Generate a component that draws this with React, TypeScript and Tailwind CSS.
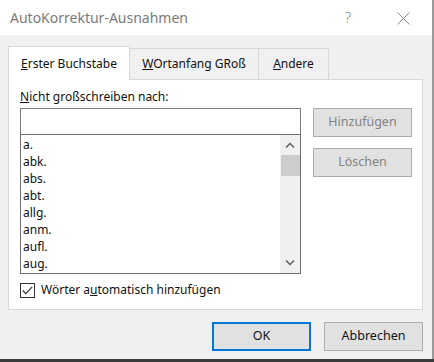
import React from 'react';

const items = ['a.', 'abk.', 'abs.', 'abt.', 'allg.', 'anm.', 'aufl.', 'aug.'];

const font = "font-['Noto_Sans',sans-serif]";

const Btn: React.FC<{ label: string; disabled?: boolean; primary?: boolean; className?: string }> = ({
  label,
  disabled,
  primary,
  className = '',
}) => (
  <div
    className={`flex h-[29px] w-[99px] items-center justify-center bg-[#e1e1e1] text-[12.5px] ${
      primary ? 'border-2 border-[#0078d7]' : 'border border-[#adadad]'
    } ${disabled ? 'text-[#838383]' : 'text-[#111]'} ${className}`}
  >
    {label}
  </div>
);

export default function App() {
  return (
    <div className={`flex h-[362px] w-[434px] flex-col bg-white ${font}`}>
      {/* title bar */}
      <div className="flex h-[35px] shrink-0 items-center justify-between border-r-2 border-[#9a9a9a] bg-white pl-[10px] pr-[22px]">
        <span className="text-[14px] text-[#7a7a7a]">AutoKorrektur-Ausnahmen</span>
        <div className="flex items-center gap-[46px]">
          <span className="text-[15px] font-light text-[#8a8a8a]">?</span>
          <svg width="13" height="13" viewBox="0 0 13 13" className="mt-[1px]">
            <path d="M0.5 0.5 L12.5 12.5 M12.5 0.5 L0.5 12.5" stroke="#8a8a8a" strokeWidth="1" fill="none" />
          </svg>
        </div>
      </div>

      {/* body */}
      <div className="flex flex-1 flex-col border-r-2 border-[#9a9a9a] bg-[#f0f0f0] pl-[8px] pr-[9px] pt-[11px]">
        {/* tabs */}
        <div className="flex h-[33px] items-end text-[12px] text-[#111]">
          <div className="relative z-10 -mb-px flex h-[34px] w-[122px] items-center justify-center border-x border-t border-[#d9d9d9] bg-white">
            <span>
              <u>E</u>rster Buchstabe
            </span>
          </div>
          <div className="flex h-[31px] w-[129px] items-center justify-center border-r border-t border-[#d9d9d9]">
            <span>
              <u>W</u>Ortanfang GRoß
            </span>
          </div>
          <div className="flex h-[31px] w-[70px] items-center justify-center border-r border-t border-[#d9d9d9]">
            <span>
              <u>A</u>ndere
            </span>
          </div>
        </div>

        {/* panel */}
        <div className="flex h-[231px] flex-col border border-[#d9d9d9] bg-white pl-[11px] pt-[8px] text-[12px] text-[#111]">
          <div className="flex">
            <div className="flex w-[281px] flex-col">
              <div className="h-[20px] leading-[18px]">
                <u>N</u>icht großschreiben nach:
              </div>
              <div className="h-[27px] border border-[#7a7a7a] bg-white" />
              <div className="-mt-px flex h-[140px] border border-[#6e6e6e] bg-white">
                <div className="flex-1 pl-[2px] pt-[1px]">
                  {items.map((it) => (
                    <div key={it} className="h-[17px] leading-[17px]">
                      {it}
                    </div>
                  ))}
                </div>
                <div className="flex w-[20px] flex-col items-center bg-[#f0f0f0]">
                  <div className="flex h-[20px] items-center justify-center">
                    <svg width="10" height="6" viewBox="0 0 10 6">
                      <path d="M1 5.5 L5 1.5 L9 5.5" stroke="#606060" strokeWidth="1.5" fill="none" />
                    </svg>
                  </div>
                  <div className="h-[21px] w-[19px] bg-[#cdcdcd]" />
                  <div className="flex-1" />
                  <div className="flex h-[20px] items-center justify-center">
                    <svg width="10" height="6" viewBox="0 0 10 6">
                      <path d="M1 0.5 L5 4.5 L9 0.5" stroke="#606060" strokeWidth="1.5" fill="none" />
                    </svg>
                  </div>
                </div>
              </div>
            </div>
            <div className="ml-[12px] flex flex-col gap-[11px] pt-[20px]">
              <Btn label="Hinzufügen" disabled />
              <Btn label="Löschen" disabled />
            </div>
          </div>
          <div className="mt-[7px] flex items-center gap-[6px]">
            <div className="flex h-[15px] w-[15px] items-center justify-center border border-[#333] bg-white">
              <svg width="11" height="9" viewBox="0 0 11 9">
                <path d="M0.8 4.5 L3.8 7.6 L10.2 0.8" stroke="#333" strokeWidth="1.2" fill="none" />
              </svg>
            </div>
            <span>
              Wörter a<u>u</u>tomatisch hinzufügen
            </span>
          </div>
        </div>

        {/* footer buttons */}
        <div className="mt-[12px] flex justify-end gap-[13px]">
          <Btn label="OK" primary />
          <Btn label="Abbrechen" />
        </div>
      </div>
      <div className="h-[3px] shrink-0 bg-[#3a3a3a]" />
    </div>
  );
}
